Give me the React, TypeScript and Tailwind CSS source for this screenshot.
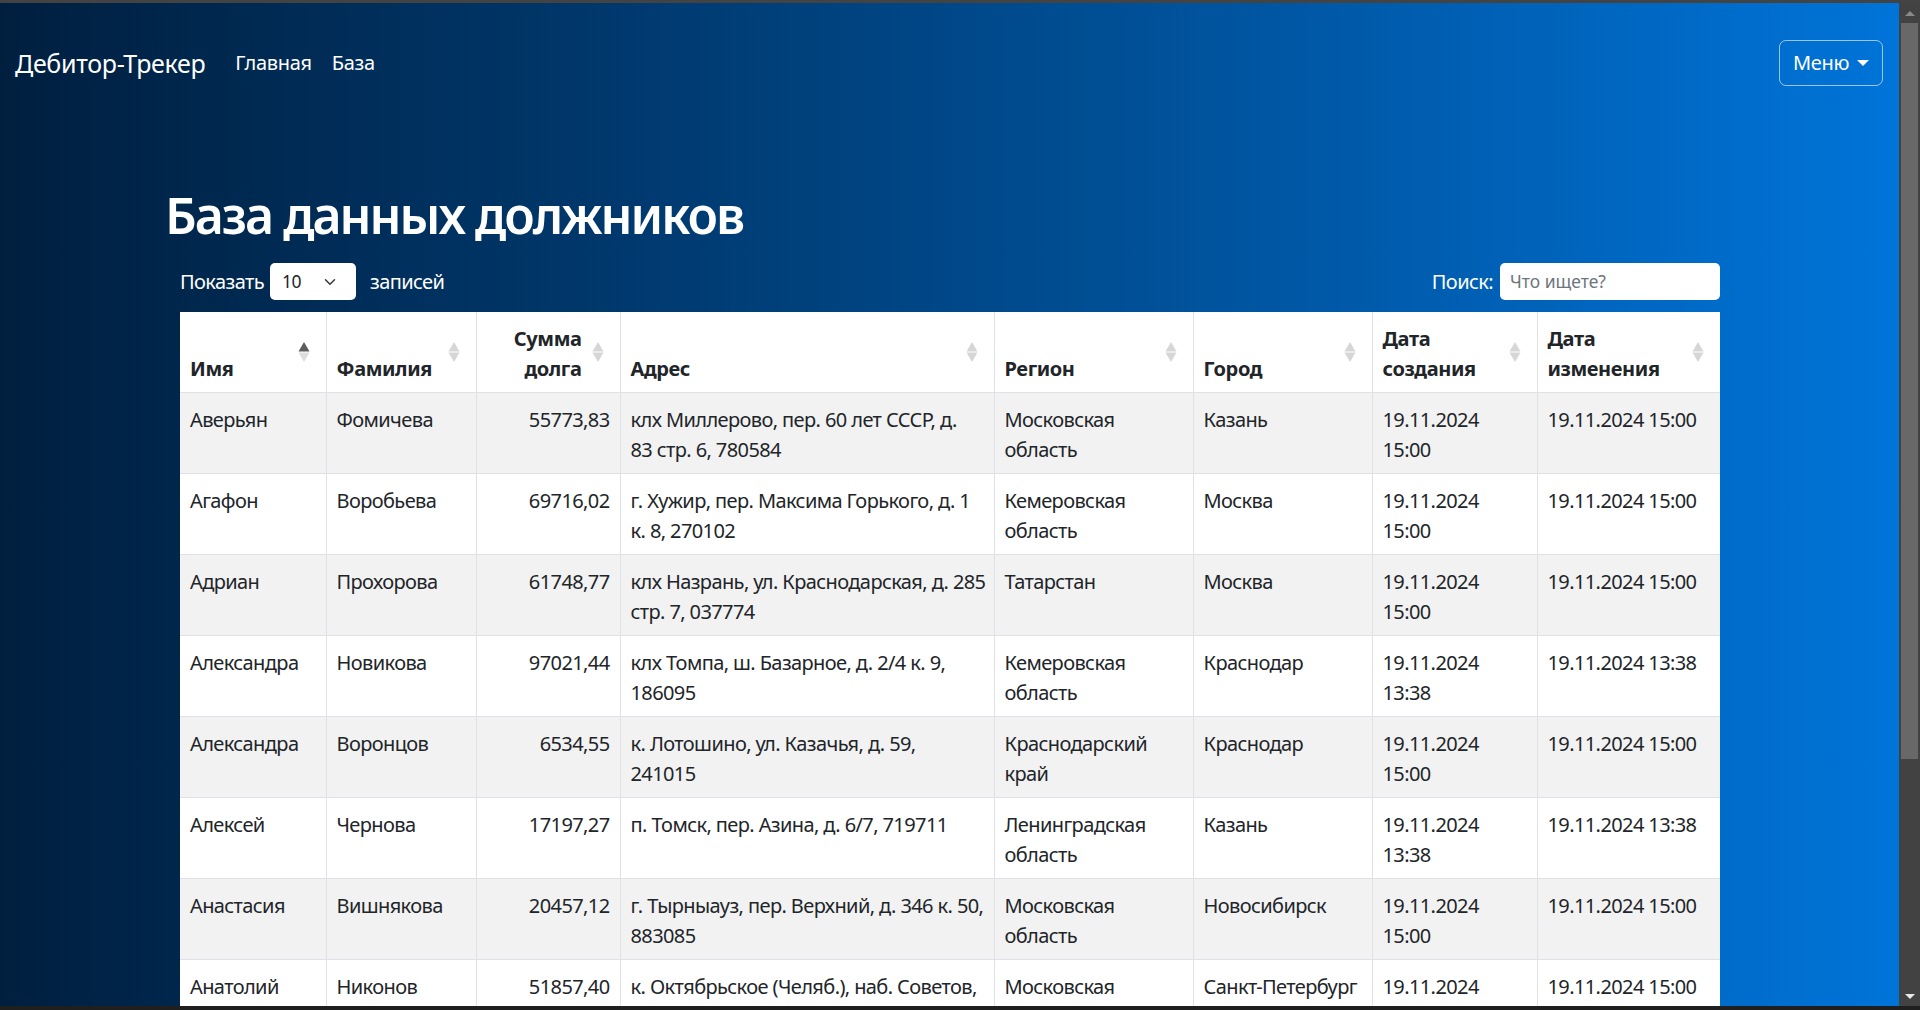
import React from 'react';
import { ChevronDown } from 'lucide-react';

type Row = {
    name: string;
    surname: string;
    debt: string;
    address: string[];
    region: string[];
    city: string;
    created: string[];
    updated: string;
};

const rows: Row[] = [
    { name: 'Аверьян', surname: 'Фомичева', debt: '55773,83', address: ['клх Миллерово, пер. 60 лет СССР, д.', '83 стр. 6, 780584'], region: ['Московская', 'область'], city: 'Казань', created: ['19.11.2024', '15:00'], updated: '19.11.2024 15:00' },
    { name: 'Агафон', surname: 'Воробьева', debt: '69716,02', address: ['г. Хужир, пер. Максима Горького, д. 1', 'к. 8, 270102'], region: ['Кемеровская', 'область'], city: 'Москва', created: ['19.11.2024', '15:00'], updated: '19.11.2024 15:00' },
    { name: 'Адриан', surname: 'Прохорова', debt: '61748,77', address: ['клх Назрань, ул. Краснодарская, д. 285', 'стр. 7, 037774'], region: ['Татарстан'], city: 'Москва', created: ['19.11.2024', '15:00'], updated: '19.11.2024 15:00' },
    { name: 'Александра', surname: 'Новикова', debt: '97021,44', address: ['клх Томпа, ш. Базарное, д. 2/4 к. 9,', '186095'], region: ['Кемеровская', 'область'], city: 'Краснодар', created: ['19.11.2024', '13:38'], updated: '19.11.2024 13:38' },
    { name: 'Александра', surname: 'Воронцов', debt: '6534,55', address: ['к. Лотошино, ул. Казачья, д. 59,', '241015'], region: ['Краснодарский', 'край'], city: 'Краснодар', created: ['19.11.2024', '15:00'], updated: '19.11.2024 15:00' },
    { name: 'Алексей', surname: 'Чернова', debt: '17197,27', address: ['п. Томск, пер. Азина, д. 6/7, 719711'], region: ['Ленинградская', 'область'], city: 'Казань', created: ['19.11.2024', '13:38'], updated: '19.11.2024 13:38' },
    { name: 'Анастасия', surname: 'Вишнякова', debt: '20457,12', address: ['г. Тырныауз, пер. Верхний, д. 346 к. 50,', '883085'], region: ['Московская', 'область'], city: 'Новосибирск', created: ['19.11.2024', '15:00'], updated: '19.11.2024 15:00' },
    { name: 'Анатолий', surname: 'Никонов', debt: '51857,40', address: ['к. Октябрьское (Челяб.), наб. Советов,', 'д. 12, 452001'], region: ['Московская', 'область'], city: 'Санкт-Петербург', created: ['19.11.2024', '15:00'], updated: '19.11.2024 15:00' },
];

const columns = [
    { label: ['Имя'], right: false, sort: 'asc' },
    { label: ['Фамилия'], right: false, sort: null },
    { label: ['Сумма', 'долга'], right: true, sort: null },
    { label: ['Адрес'], right: false, sort: null },
    { label: ['Регион'], right: false, sort: null },
    { label: ['Город'], right: false, sort: null },
    { label: ['Дата', 'создания'], right: false, sort: null },
    { label: ['Дата', 'изменения'], right: false, sort: null },
];

function SortIcon({ active }: { active: boolean }) {
    return (
        <svg width="12" height="22" viewBox="0 0 12 22" className="absolute right-[16px] top-1/2 -translate-y-1/2">
            <polygon points="6,1 11.5,10.5 0.5,10.5" fill={active ? '#5c5c5c' : '#d6d6d6'} />
            <polygon points="0.5,11.5 11.5,11.5 6,21" fill={active ? '#dedede' : '#d6d6d6'} />
        </svg>
    );
}

function Lines({ lines }: { lines: string[] }) {
    return (
        <>
            {lines.map((l, i) => (
                <span key={i} className="block whitespace-nowrap">{l}</span>
            ))}
        </>
    );
}

// fake dark scrollbar, the headless page shows none
function Scrollbar() {
    return (
        <div className="w-[21px] shrink-0 bg-[#424242] flex flex-col items-center">
            <div className="h-[20px] flex items-center justify-center">
                <span className="border-b-[5px] border-x-[5px] border-t-0 border-x-transparent border-b-[#8a8a8a]" />
            </div>
            <div className="w-[17px] h-[736px] bg-[#686868]" />
            <div className="flex-1" />
            <div className="h-[20px] flex items-center justify-center">
                <span className="border-t-[5px] border-x-[5px] border-b-0 border-x-transparent border-t-[#e8e8e8]" />
            </div>
        </div>
    );
}

export default function App() {
    return (
        <div className="h-[1010px] flex flex-col bg-[#1f1f1f] font-['Segoe_UI','Noto_Sans',sans-serif] overflow-hidden">
            <div className="h-[3px] bg-[#434343] shrink-0" />
            <div className="flex-1 min-h-0 flex">
                <div className="flex-1 min-w-0 overflow-hidden bg-gradient-to-r from-[#001f3f] to-[#0074d9]">
                    {/* navbar */}
                    <nav className="mt-[37px] h-[46px] pl-[15px] pr-[16px] flex items-center justify-between text-white tracking-[-0.02em]">
                        <div className="flex items-center">
                            <span className="text-[25px] leading-[38px] mr-[20px]">Дебитор-Трекер</span>
                            <a className="text-[20px] leading-[30px] px-[10px]">Главная</a>
                            <a className="text-[20px] leading-[30px] px-[10px]">База</a>
                        </div>
                        <button className="h-[46px] w-[104px] rounded-[7px] border border-white/60 text-[20px] leading-[30px] flex items-center justify-center">
                            Меню
                            <span className="ml-[8px] inline-block border-t-[6px] border-x-[6px] border-b-0 border-x-transparent border-t-white" />
                        </button>
                    </nav>

                    <main className="pl-[165px] pb-[60px]">
                        <h1 className="mt-[98px] text-[50px] leading-[62px] font-semibold tracking-[-0.04em] text-white">База данных должников</h1>

                        <div className="ml-[15px] mt-[17px] w-[1540px] h-[37px] flex items-center justify-between text-white text-[20px] tracking-[-0.03em]">
                            <div className="flex items-center">
                                <span>Показать</span>
                                <div className="ml-[6px] h-[37px] w-[86px] bg-white rounded-[5px] flex items-center justify-between pl-[12px] pr-[17px] text-[#212529] text-[17.5px]">
                                    <span>10</span>
                                    <ChevronDown className="w-[18px] h-[18px] text-[#343a40]" strokeWidth={2} />
                                </div>
                                <span className="ml-[14px]">записей</span>
                            </div>
                            <div className="flex items-center">
                                <span>Поиск:</span>
                                <div className="ml-[7px] h-[37px] w-[220px] bg-white rounded-[5px] flex items-center pl-[10px] text-[#6c757d] text-[17.5px] tracking-normal">
                                    Что ищете?
                                </div>
                            </div>
                        </div>

                        <table className="ml-[15px] mt-[12px] w-[1540px] table-fixed border-collapse bg-white text-[#212529] text-[20px] leading-[30px]">
                            <colgroup>
                                <col className="w-[146px]" />
                                <col className="w-[150px]" />
                                <col className="w-[144px]" />
                                <col className="w-[374px]" />
                                <col className="w-[199px]" />
                                <col className="w-[179px]" />
                                <col className="w-[165px]" />
                                <col className="w-[183px]" />
                            </colgroup>
                            <thead>
                                <tr className="h-[80px]">
                                    {columns.map((c, i) => (
                                        <th
                                            key={i}
                                            className={`relative align-bottom font-bold tracking-[-0.02em] pl-[10px] pr-[38px] pt-[12px] pb-[8px] border-b border-[#dee2e6] ${i > 0 ? 'border-l' : ''} ${c.right ? 'text-right' : 'text-left'}`}
                                        >
                                            <Lines lines={c.label} />
                                            <SortIcon active={c.sort === 'asc'} />
                                        </th>
                                    ))}
                                </tr>
                            </thead>
                            <tbody className="tracking-[-0.03em]">
                                {rows.map((r, i) => (
                                    <tr key={i} className={`h-[81px] ${i % 2 === 0 ? 'bg-[#f2f2f2]' : 'bg-white'}`}>
                                        <td className="align-top px-[10px] pt-[12px] pb-[8px] border-b border-[#dee2e6]">{r.name}</td>
                                        <td className="align-top px-[10px] pt-[12px] pb-[8px] border-b border-l border-[#dee2e6]">{r.surname}</td>
                                        <td className="align-top px-[10px] pt-[12px] pb-[8px] border-b border-l border-[#dee2e6] text-right">{r.debt}</td>
                                        <td className="align-top px-[10px] pt-[12px] pb-[8px] border-b border-l border-[#dee2e6]"><Lines lines={r.address} /></td>
                                        <td className="align-top px-[10px] pt-[12px] pb-[8px] border-b border-l border-[#dee2e6]"><Lines lines={r.region} /></td>
                                        <td className="align-top px-[10px] pt-[12px] pb-[8px] border-b border-l border-[#dee2e6] whitespace-nowrap">{r.city}</td>
                                        <td className="align-top px-[10px] pt-[12px] pb-[8px] border-b border-l border-[#dee2e6]"><Lines lines={r.created} /></td>
                                        <td className="align-top px-[10px] pt-[12px] pb-[8px] border-b border-l border-[#dee2e6] whitespace-nowrap">{r.updated}</td>
                                    </tr>
                                ))}
                            </tbody>
                        </table>
                    </main>
                </div>
                <Scrollbar />
            </div>
            <div className="h-[4px] bg-[#1f1f1f] shrink-0" />
        </div>
    );
}
